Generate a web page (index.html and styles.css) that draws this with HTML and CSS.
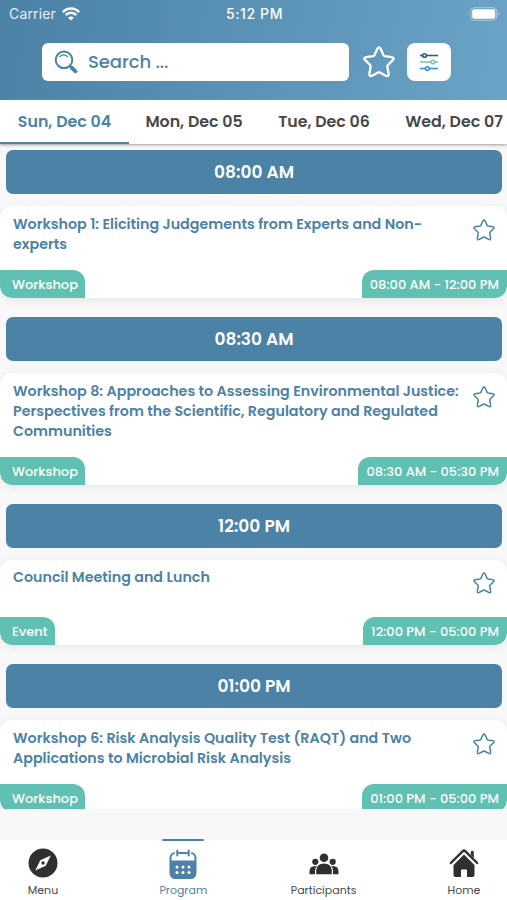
FILE: index.html
```html
<!DOCTYPE html>
<html lang="en">
<head>
<meta charset="utf-8">
<title>Program</title>
<link rel="stylesheet" href="styles.css">
</head>
<body>
<svg class="defs" width="0" height="0" aria-hidden="true">
  <symbol id="star" viewBox="0 0 32 32">
    <path d="M14.500 2.600Q16 0 17.500 2.600L20.600 9.200Q21 10 22 10.200L28.800 11.100Q32 11.700 29.800 14.100L24.900 19Q24.200 19.700 24.400 20.700L25.600 27.700Q25.900 31 22.900 29.700L17 26.500Q16 26 15 26.500L9.100 29.700Q6.100 31 6.400 27.700L7.600 20.700Q7.800 19.700 7.100 19L2.200 14.100Q0 11.700 3.200 11.100L10 10.200Q11 10 11.400 9.200Z" fill="none" stroke="currentColor" stroke-linejoin="round"/>
  </symbol>
</svg>
<div class="app">
  <header class="header">
    <div class="status">
      <div class="carrier"><span>Carrier</span>
        <svg width="18" height="14" viewBox="0 0 18 14" fill="none" stroke="#fff" stroke-width="2.500"><path d="M.8 5.100C5.400.3 12.600.3 17.200 5.100M3.700 8C6.700 5 11.300 5 14.300 8"/><path d="M9 13.600L6.100 10.700Q9 8.200 11.900 10.700Z" fill="#fff" stroke="none"/></svg>
      </div>
      <div class="clock">5:12 PM</div>
      <svg class="battery" width="30" height="14" viewBox="0 0 30 14"><rect x=".7" y=".7" width="26" height="12.600" rx="3.500" fill="none" stroke="#a9cbe0"/><rect x="2.200" y="2.200" width="23" height="9.600" rx="2" fill="#fff"/><path d="M28 4.800Q30.200 7 28 9.200Z" fill="#a9cbe0"/></svg>
    </div>
    <div class="tools">
      <div class="search">
        <svg width="24" height="24" viewBox="0 0 24 24" fill="none" stroke="#4b82a5"><circle cx="10" cy="9.800" r="8.300" stroke-width="2"/><path d="M5.500 7Q9.500 2.800 14 7" stroke-width="1.300"/><path d="M15.500 15.500L18 18" stroke-width="2"/><path d="M17.500 17.500L21.500 21.300" stroke-width="3.800" stroke-linecap="round"/></svg>
        <span>Search ...</span>
      </div>
      <svg class="fav"><use href="#star"/></svg>
      <div class="filter">
        <svg width="20" height="20" viewBox="0 0 20 20" fill="#fff" stroke-width="1.600"><g stroke="#315c78"><path d="M1 3.500H19"/><circle cx="5.500" cy="3.500" r="1.800"/></g><g stroke="#7cc3b8"><path d="M1 10H19"/><circle cx="14" cy="10" r="1.800"/></g><g stroke="#3295df"><path d="M1 16.500H19"/><circle cx="8.300" cy="16.500" r="1.800"/></g></svg>
      </div>
    </div>
  </header>
  <nav class="tabs">
    <div class="tab active"><span>Sun, Dec 04</span></div>
    <div class="tab"><span>Mon, Dec 05</span></div>
    <div class="tab"><span>Tue, Dec 06</span></div>
    <div class="tab"><span>Wed, Dec 07</span></div>
  </nav>
  <main class="list">
    <h2 class="hour">08:00 AM</h2>
    <article class="card">
      <div class="body"><h3>Workshop 1: Eliciting Judgements from Experts and Non-<br>experts</h3><svg class="star"><use href="#star"/></svg></div>
      <div class="tags"><span class="tag kind">Workshop</span><span class="tag time">08:00 AM - 12:00 PM</span></div>
    </article>
    <h2 class="hour">08:30 AM</h2>
    <article class="card">
      <div class="body"><h3>Workshop 8: Approaches to Assessing Environmental Justice:<br>Perspectives from the Scientific, Regulatory and Regulated<br>Communities</h3><svg class="star"><use href="#star"/></svg></div>
      <div class="tags"><span class="tag kind">Workshop</span><span class="tag time">08:30 AM - 05:30 PM</span></div>
    </article>
    <h2 class="hour">12:00 PM</h2>
    <article class="card">
      <div class="body"><h3>Council Meeting and Lunch</h3><svg class="star"><use href="#star"/></svg></div>
      <div class="tags"><span class="tag kind">Event</span><span class="tag time">12:00 PM - 05:00 PM</span></div>
    </article>
    <h2 class="hour">01:00 PM</h2>
    <article class="card">
      <div class="body"><h3>Workshop 6: Risk Analysis Quality Test (RAQT) and Two<br>Applications to Microbial Risk Analysis</h3><svg class="star"><use href="#star"/></svg></div>
      <div class="tags"><span class="tag kind">Workshop</span><span class="tag time">01:00 PM - 05:00 PM</span></div>
    </article>
  </main>
  <nav class="bottom">
    <div class="item">
      <svg width="30" height="30" viewBox="0 0 30 30"><circle cx="15" cy="15" r="14.500" fill="#303031"/><path d="M22.800 7.500L17.700 17.700L7.200 22.500L12.300 12.300Z" fill="#fff"/><circle cx="15" cy="15" r="1.700" fill="#303031"/></svg>
      <span>Menu</span>
    </div>
    <div class="item current">
      <svg width="30" height="30" viewBox="0 0 30 30"><rect x="2.500" y="4" width="25" height="25" rx="5" fill="#fff" stroke="#4b82a5" stroke-width="2"/><path d="M2 11.500H28V24Q28 30 22 30H8Q2 30 2 24Z" fill="#4b82a5"/><path d="M9.300 1V6.500M20.700 1V6.500" stroke="#fff" stroke-width="5"/><path d="M9.300 1.500V6.500M20.700 1.500V6.500" stroke="#4b82a5" stroke-width="2" stroke-linecap="round"/><path d="M9.300 4H20.700" stroke="#4b82a5" stroke-width="1.800"/><g fill="#fff"><circle cx="9" cy="18" r="1.500"/><circle cx="15" cy="18" r="1.500"/><circle cx="21" cy="18" r="1.500"/><circle cx="9" cy="23.500" r="1.500"/><circle cx="15" cy="23.500" r="1.500"/><circle cx="21" cy="23.500" r="1.500"/></g></svg>
      <span>Program</span>
    </div>
    <div class="item">
      <svg width="30" height="30" viewBox="0 0 30 30" fill="#303031"><circle cx="15" cy="9.800" r="4.300"/><circle cx="6.300" cy="13.800" r="3.100"/><circle cx="23.700" cy="13.800" r="3.100"/><path d="M7.200 26.200V22Q7.800 15.500 15 15.500T22.800 22V26.200ZM6 26.200H.5V23Q.7 18.200 6.300 18Q7 18 7.500 18.300Q6 20 6 23ZM24 26.200H29.500V23Q29.300 18.200 23.700 18Q23 18 22.500 18.300Q24 20 24 23Z"/></svg>
      <span>Participants</span>
    </div>
    <div class="item">
      <svg width="30" height="30" viewBox="0 0 30 30"><path d="M1.800 15L13.800 3.200Q15 2 16.200 3.200L28.200 15" fill="none" stroke="#303031" stroke-width="2.400" stroke-linecap="round"/><path d="M21.800 3.500Q23.300 2 24.800 3.500V10L21.800 7Z" fill="#303031"/><path d="M15 6.500L25.500 17V27Q25.500 29 23.500 29H18V22.500Q18 21.500 17 21.500H13Q12 21.500 12 22.500V29H6.500Q4.500 29 4.500 27V17Z" fill="#303031"/></svg>
      <span>Home</span>
    </div>
  </nav>
</div>
</body>
</html>
```
FILE: styles.css
```css
* { box-sizing: border-box; }
body { margin: 0; font-family: Poppins, Inter, "Liberation Sans", sans-serif; color: #48484a; }
svg { display: block; flex: none; }
.defs { height: 0; }
.app { width: 507px; height: 900px; display: flex; flex-direction: column; overflow: hidden; background: #f8f8f8; }
.header { flex: none; height: 100px; background: linear-gradient(100deg, #4b82a5 0%, #5991b4 45%, #6ba3c6 100%); }
.status { height: 28px; display: grid; grid-template-columns: 1fr auto 1fr; align-items: center; padding: 0 7px 1px 9px; color: #fff; font-family: Inter, "Liberation Sans", sans-serif; }
.carrier { display: flex; align-items: center; gap: 6px; font-size: 14px; letter-spacing: .15px; color: #e6f0f6; }
.clock { font-size: 14px; font-weight: 500; letter-spacing: .6px; }
.battery { justify-self: end; }
.tools { display: flex; align-items: center; padding: 15px 0 0 42px; }
.search { width: 307px; height: 38px; border-radius: 6px; background: #fff; display: flex; align-items: center; gap: 10px; padding: 0 0 1px 12px; color: #4b82a5; font-size: 18px; font-weight: 500; letter-spacing: -.1px; }
.fav { width: 32px; height: 34px; margin-left: 14px; color: #fff; stroke-width: 2.3; }
.filter { width: 44px; height: 38px; margin-left: 12px; border-radius: 8px; background: #fff; display: flex; align-items: center; justify-content: center; }
.tabs { position: relative; z-index: 1; flex: none; display: flex; height: 44px; background: #fff; box-shadow: 0 1px 3px #999; font-size: 15.8px; font-weight: 600; white-space: nowrap; }
.tab { flex: none; width: 130px; text-align: center; line-height: 44px; }
.tab.active { width: 129px; color: #4b82a5; border-bottom: 2px solid #4b82a5; }
.list { height: 665px; overflow: hidden; padding-top: 6px; }
.hour { margin: 0 5px 12.300px 6px; height: 44px; line-height: 45px; border-radius: 7px; background: #4b82a5; color: #fff; text-align: center; font-size: 17px; font-weight: 600; }
.card { display: flex; flex-direction: column; justify-content: space-between; min-height: 85.500px; margin-bottom: 18.500px; background: #fff; border-radius: 12px; box-shadow: 0 2px 8px #e4e4e4; overflow: hidden; }
.body { display: flex; justify-content: space-between; padding: 7.500px 12px 16px 13px; }
.body h3 { margin: 0; font-size: 14.27px; line-height: 20px; font-weight: 600; color: #4b82a5; white-space: nowrap; }
.star { width: 22px; height: 22px; margin: 5px 0 -20px; color: #4b82a5; stroke-width: 2.2; }
.tags { display: flex; justify-content: space-between; }
.tag { height: 28.500px; line-height: 29px; background: #60c0b2; color: #fff; font-size: 13px; font-weight: 500; white-space: nowrap; }
.kind { padding: 0 7px 0 12px; border-radius: 0 12px 0 12px; }
.time { padding: 0 8px; border-radius: 12px 0 12px 0; }
.bottom { flex: none; height: 60px; margin-top: 31px; display: flex; justify-content: space-between; background: #fff; font-size: 11px; }
.item { width: 86px; display: flex; flex-direction: column; align-items: center; padding-top: 8px; gap: 4px; }
.current { color: #4b82a5; }
.current::before { content: ""; width: 42px; height: 2px; margin: -9px 0 4px; background: #4b82a5; border-radius: 1px; }
.current span { margin-top: -1px; }
```
